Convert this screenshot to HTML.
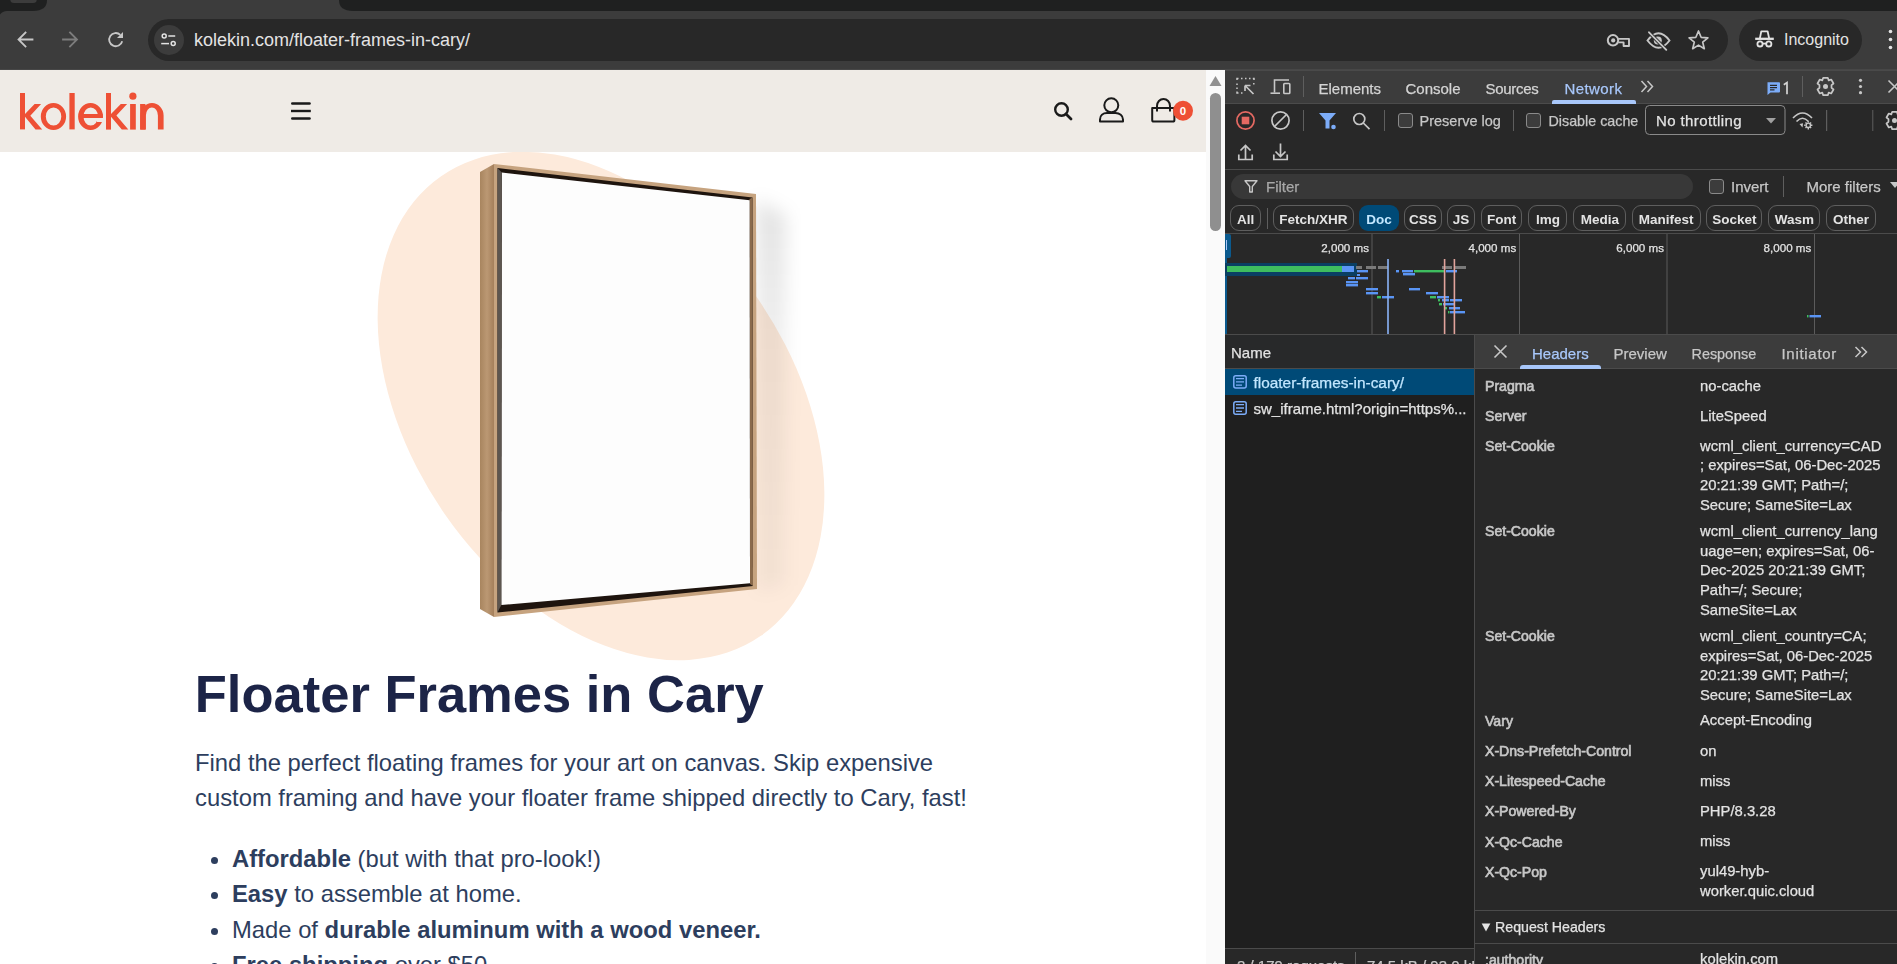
<!DOCTYPE html>
<html><head><meta charset="utf-8">
<style>
*{margin:0;padding:0;box-sizing:border-box}
html,body{width:1897px;height:964px;overflow:hidden;background:#3c3c3c;font-family:"Liberation Sans",sans-serif}
.a{position:absolute}
.t{position:absolute;white-space:nowrap;line-height:1}
svg{position:absolute;overflow:visible}
#dt{will-change:transform}
#dt .t{-webkit-text-stroke:0.25px currentColor}
.bul{position:absolute;left:15.5px;top:16px;width:7px;height:7px;border-radius:50%;background:#2d3e5e}
</style></head><body>

<!-- ===== Browser chrome ===== -->
<svg style="left:0;top:0" width="1897" height="20">
  <path d="M0 0 H47 Q47 10.9 33 10.9 H7 Q2.5 10.9 0 14.6 Z" fill="#1f2020"/>
  <path d="M10.4 0 H36.7 Q36.7 2.9 33 2.9 H14 Q10.4 2.9 10.4 0 Z" fill="#3c3c3c"/>
  <path d="M339 0 Q339 10.9 353 10.9 H1897 V0 Z" fill="#1f2020"/>
</svg>
<div class="a" style="left:0;top:69px;width:1897px;height:1px;background:#474747"></div>

<!-- nav icons -->
<svg style="left:0;top:0" width="140" height="70">
  <g stroke="#c7c7c7" stroke-width="1.8" fill="none" stroke-linecap="square">
    <path d="M19 39.5 H32.5 M25.5 32.5 L18.5 39.5 L25.5 46.5"/>
  </g>
  <path d="M123 32 V38 H117 Z" fill="#c7c7c7"/>
  <g stroke="#7d7d7d" stroke-width="1.8" fill="none" stroke-linecap="square">
    <path d="M63 39.5 H76.5 M70 32.5 L77 39.5 L70 46.5"/>
  </g>
  <g stroke="#c7c7c7" stroke-width="1.8" fill="none">
    <path d="M122.2 41.2 A6.6 6.6 0 1 1 120.3 34.8"/>
  </g>
</svg>

<!-- omnibox -->
<div class="a" style="left:148px;top:19px;width:1580px;height:42px;border-radius:21px;background:#282828"></div>
<div class="a" style="left:154px;top:25px;width:30px;height:30px;border-radius:15px;background:#3c3c3c"></div>
<svg style="left:0;top:0" width="200" height="70">
  <g stroke="#e3e3e3" stroke-width="1.5" fill="none">
    <circle cx="164.2" cy="36" r="2"/>
    <path d="M168.3 36 H175.2"/>
    <circle cx="173.2" cy="43.6" r="2"/>
    <path d="M161.2 43.6 H169"/>
  </g>
</svg>
<div class="t" style="left:194px;top:31px;font-size:18px;color:#e3e3e3">kolekin.com/floater-frames-in-cary/</div>

<!-- right omnibox icons -->
<svg style="left:0;top:0" width="1897" height="70">
  <g stroke="#c7c7c7" stroke-width="2" fill="none">
    <circle cx="1613" cy="40.3" r="5.2"/>
    <path d="M1618.3 38.9 H1629 V46 H1623.6 V42.4 H1618.3" stroke-width="1.9" stroke-linejoin="round"/>
  </g>
  <circle cx="1613.2" cy="40.4" r="2.1" fill="#c7c7c7"/>
  <g stroke="#c7c7c7" stroke-width="1.9" fill="none">
    <path d="M1647.5 40.5 Q1658.5 26 1669.5 40.5 Q1658.5 55 1647.5 40.5 Z"/>
  </g>
  <circle cx="1657.8" cy="40.5" r="4" fill="#c7c7c7"/>
  <path d="M1648.5 32 L1666.5 50" stroke="#282828" stroke-width="3.6"/>
  <path d="M1649 32.3 L1666.3 49.8" stroke="#c7c7c7" stroke-width="1.9" stroke-linecap="round"/>
  <g stroke="#c7c7c7" stroke-width="1.7" fill="none" stroke-linejoin="round">
    <path d="M1698.5 31 L1701.1 37.3 L1707.9 37.8 L1702.7 42.1 L1704.3 48.7 L1698.5 45.1 L1692.7 48.7 L1694.3 42.1 L1689.1 37.8 L1695.9 37.3 Z"/>
  </g>
</svg>
<div class="a" style="left:1739px;top:19px;width:123px;height:42px;border-radius:21px;background:#282828"></div>
<svg style="left:0;top:0" width="1897" height="70">
  <g stroke="#e3e3e3" stroke-width="1.8" fill="none" stroke-linejoin="round">
    <path d="M1759.8 38.6 L1761.3 31.3 H1767.6 L1769.2 38.6"/>
    <path d="M1755.2 38.8 H1773.8" stroke-width="2.3"/>
    <circle cx="1760" cy="43.9" r="2.6"/>
    <circle cx="1768.8" cy="43.9" r="2.6"/>
    <path d="M1762.6 43.6 H1766.2"/>
  </g>
  <g fill="#e3e3e3">
    <circle cx="1890.5" cy="31.5" r="1.8"/>
    <circle cx="1890.5" cy="39.5" r="1.8"/>
    <circle cx="1890.5" cy="47.5" r="1.8"/>
  </g>
</svg>
<div class="t" style="left:1784px;top:32px;font-size:16px;color:#e3e3e3">Incognito</div>

<!-- ===== Page viewport ===== -->
<div class="a" id="page" style="left:0;top:70px;width:1206px;height:894px;background:#fff;overflow:hidden">
  <svg style="left:0;top:-70px" width="1206" height="964">
    <ellipse cx="601" cy="406" rx="280" ry="190" transform="rotate(55.18 601 406)" fill="#fdeadb"/>
  </svg>
  <svg style="left:0;top:-70px" width="1206" height="964">
    <defs>
      <filter id="shb" x="-50%" y="-50%" width="200%" height="200%"><feGaussianBlur stdDeviation="9"/></filter>
      <linearGradient id="shg" x1="0" x2="0" y1="0" y2="1"><stop offset="0" stop-color="#000" stop-opacity="0.11"/><stop offset="0.35" stop-color="#000" stop-opacity="0.07"/><stop offset="1" stop-color="#000" stop-opacity="0.04"/></linearGradient>
      <linearGradient id="wood" x1="0" x2="1" y1="0" y2="0">
        <stop offset="0" stop-color="#a8855f"/><stop offset="0.5" stop-color="#bb9873"/><stop offset="1" stop-color="#a47f5b"/>
      </linearGradient>
    </defs>
    <polygon points="756,200 786,215 784,585 757,592" fill="url(#shg)" filter="url(#shb)"/>
    <polygon points="480,172 494,164 494,617 480,609" fill="url(#wood)"/>
    <polygon points="494,164 756,194 757,589 494,617" fill="#c6a37f"/>
    <polygon points="497.5,168 752.5,197.5 753,586 497.5,612.5" fill="#1e140e"/>
    <polygon points="749.5,199 752.5,197.5 753,586 750,584" fill="#8a6a4c"/>
    <polygon points="501.8,172.6 749.6,200.2 750,583.3 501.3,605" fill="#fdfdfd"/>
    <polygon points="497.5,168 501.8,172.6 501.3,605 497.5,612.5" fill="#5d5650"/>
  </svg>
  <div class="t" style="left:194.8px;top:598.2px;font-size:52.5px;font-weight:bold;color:#1c2447">Floater Frames in Cary</div>
  <div class="t" style="left:195px;top:676px;font-size:23.8px;line-height:34.5px;color:#2d3e5e;white-space:normal;width:800px">Find the perfect floating frames for your art on canvas. Skip expensive<br>custom framing and have your floater frame shipped directly to Cary, fast!</div>
  <div class="a" style="left:195px;top:770.8px;font-size:23.8px;line-height:35.4px;color:#2d3e5e;width:800px">
    <div style="position:relative;padding-left:37px"><span class="bul"></span><b>Affordable</b> (but with that pro-look!)</div>
    <div style="position:relative;padding-left:37px"><span class="bul"></span><b>Easy</b> to assemble at home.</div>
    <div style="position:relative;padding-left:37px"><span class="bul"></span>Made of <b>durable aluminum with a wood veneer.</b></div>
    <div style="position:relative;padding-left:37px"><span class="bul"></span><b>Free shipping</b> over $50</div>
  </div>

  <div class="a" style="left:0;top:0;width:1206px;height:82px;background:#efebe6"></div>
  <svg style="left:0;top:-70px" width="1206" height="160">
    <g fill="#ee5035">
      <rect x="20" y="93" width="5" height="36.4"/>
      <polygon points="25,114 34.6,104 41.1,104 30.3,115.7 42.2,129.4 35.5,129.4 25,116.8"/>
      <path fill-rule="evenodd" d="M40.8 116.5 a12.65 13.5 0 1 0 25.3 0 a12.65 13.5 0 1 0 -25.3 0 Z M45.8 116.5 a7.75 9.05 0 1 0 15.5 0 a7.75 9.05 0 1 0 -15.5 0 Z"/>
      <rect x="69.4" y="93" width="5.3" height="36.4"/>
      <path fill-rule="evenodd" d="M78.1 116.5 a12.45 13.5 0 1 0 24.9 0 a12.45 13.5 0 1 0 -24.9 0 Z M83.5 116.5 a7.25 9.1 0 1 0 14.5 0 a7.25 9.1 0 1 0 -14.5 0 Z"/>
      <rect x="79" y="114" width="23.5" height="4"/>
      <rect x="106" y="93" width="5" height="36.6"/>
      <polygon points="111,114 120.8,104 127.1,104 116.4,115.5 128.3,129.6 121.8,129.6 111,116.8"/>
      <rect x="130.1" y="104" width="5.7" height="25.6"/>
      <circle cx="132.9" cy="96.2" r="3.6"/>
      <rect x="140.1" y="104" width="5.3" height="25.6"/>
      <path d="M140.4 129.6 V115.5 A11.6 12.5 0 0 1 163.6 115.5 V129.6 H157.9 V115.5 A6 8 0 0 0 145.9 115.5 V129.6 Z"/>
    </g>
    <rect x="97" y="118" width="7" height="4" fill="#efebe6"/>
    <g fill="#1a1a1a">
      <rect x="291" y="102.2" width="19.8" height="2.6" rx="1.3"/>
      <rect x="291" y="109.8" width="19.8" height="2.4"/>
      <rect x="291" y="117.2" width="19.8" height="2.6" rx="1.3"/>
    </g>
    <g stroke="#1a1a1a" fill="none" stroke-width="2.4">
      <circle cx="1061.5" cy="109.5" r="6.3"/>
      <path d="M1066 114 L1071 119" stroke-width="2.8" stroke-linecap="round"/>
      <circle cx="1111.3" cy="105.3" r="7" stroke-width="2"/>
      <path d="M1100 121.6 V119.5 C1100 115.5 1103 113 1107 113 H1115.5 C1119.5 113 1123 115.5 1123 119.5 V121.6 Z" stroke-width="2" stroke-linejoin="round"/>
      <path d="M1152.2 108 H1174.4 V120 Q1174.4 121.6 1172.8 121.6 H1153.8 Q1152.2 121.6 1152.2 120 Z" stroke-width="2" stroke-linejoin="round"/>
      <path d="M1157 111.5 V106 A6.5 7 0 0 1 1170 106 V111.5" stroke-width="2"/>
    </g>
    <circle cx="1183" cy="110.7" r="10" fill="#ee5035"/>
    <text x="1183" y="114.8" font-family="Liberation Sans" font-weight="bold" font-size="11.5" fill="#fff" text-anchor="middle">0</text>
  </svg>
</div>

<!-- page scrollbar -->
<div class="a" style="left:1206px;top:70px;width:19px;height:894px;background:#fafafa"></div>
<svg style="left:0;top:0" width="1897" height="240"><path d="M1209.5 86 L1215.5 76 L1221.5 86 Z" fill="#919191"/></svg>
<div class="a" style="left:1210px;top:92.5px;width:11px;height:138.5px;border-radius:5.5px;background:#8f8f8f"></div>

<!-- ===== DevTools ===== -->
<div class="a" id="dt" style="left:0;top:0;width:1897px;height:964px;clip-path:inset(70px 0 0 1225px)">
<div class="a" style="left:1225px;top:70px;width:672px;height:894px;background:#282828;"></div>
<div class="a" style="left:1225px;top:70px;width:672px;height:33px;background:#3c3c3c;"></div>
<div class="a" style="left:1225px;top:70px;width:672px;height:1px;background:#4a4a4a;"></div>
<div class="a" style="left:1225px;top:103px;width:672px;height:1px;background:#4b4b4b;"></div>
<div class="a" style="left:1225px;top:169px;width:672px;height:1px;background:#4b4b4b;"></div>
<div class="a" style="left:1225px;top:233px;width:672px;height:1px;background:#4b4b4b;"></div>
<div class="a" style="left:1225px;top:334px;width:672px;height:1px;background:#4b4b4b;"></div>
<div class="a" style="left:1225px;top:335px;width:249px;height:629px;background:#1f1f1f;"></div>
<div class="a" style="left:1225px;top:335px;width:249px;height:33px;background:#28292a;"></div>
<div class="a" style="left:1475px;top:335px;width:422px;height:33px;background:#3c3c3c;"></div>
<div class="a" style="left:1225px;top:368px;width:672px;height:1px;background:#4b4b4b;"></div>
<div class="a" style="left:1474px;top:335px;width:1px;height:629px;background:#4b4b4b;"></div>
<svg style="left:0;top:0" width="1897" height="110">
 <g stroke="#c7c7c7" stroke-width="1.5" fill="none">
  <path d="M1237 80 v-1.5 h1.5 M1241 78.5 h1.5 M1245 78.5 h1.5 M1249 78.5 h1.5 M1252.8 78.5 h1.2 v1.5 M1253.8 83 v1.5 M1237 83.5 v1.5 M1237 87.5 v1.5 M1237 91.5 v1.5 h1.5 M1241 93 h1.5" stroke-linecap="butt"/>
  <path d="M1245 85.5 L1253.5 94 M1245 85.5 h5.5 M1245 85.5 v5.5" stroke-width="1.7"/>
 </g>
 <g stroke="#c7c7c7" stroke-width="1.6" fill="none">
  <path d="M1274.5 92.5 V80 H1289"/>
  <path d="M1270.5 93.2 H1280"/>
  <rect x="1283.8" y="83.5" width="6" height="10" rx="0.8"/>
 </g>
 <rect x="1303" y="76" width="1" height="21" fill="#5e5e5e"/>
 <g stroke="#c7c7c7" stroke-width="1.5" fill="none">
  <path d="M1641.5 81 L1646.5 86.5 L1641.5 92 M1647.5 81 L1652.5 86.5 L1647.5 92"/>
 </g>
 <path d="M1767.5 82.2 h11.5 q1 0 1 1 v8.3 q0 1 -1 1 h-8.5 l-3 2.5 z" fill="#7cacf8"/>
 <g stroke="#282828" stroke-width="1.2"><path d="M1770 85.3 h7 M1770 87.6 h7 M1770 89.9 h4.5"/></g>
 <rect x="1802" y="76" width="1" height="21" fill="#5e5e5e"/>
 <g fill="#7d7d7d"></g>
 <g stroke="#c7c7c7" stroke-width="1.7" fill="none">
  <circle cx="1825.5" cy="86.5" r="2.5" fill="#c7c7c7" stroke="none"/>
  <path d="M1823.2 77.8 h4.6 l0.9 2.6 l2.5 -0.9 l2.3 4 l-2 1.7 v2.6 l2 1.7 l-2.3 4 l-2.5 -0.9 l-0.9 2.6 h-4.6 l-0.9 -2.6 l-2.5 0.9 l-2.3 -4 l2 -1.7 v-2.6 l-2 -1.7 l2.3 -4 l2.5 0.9 z" stroke-linejoin="round"/>
 </g>
 <g fill="#c7c7c7"><circle cx="1860.5" cy="80.3" r="1.6"/><circle cx="1860.5" cy="86.5" r="1.6"/><circle cx="1860.5" cy="92.7" r="1.6"/></g>
 <g stroke="#c7c7c7" stroke-width="1.6"><path d="M1888.5 80.5 L1900.5 92.5 M1900.5 80.5 L1888.5 92.5"/></g>
 <rect x="1552" y="100" width="84" height="4" rx="2" fill="#a8c7fa"/>
</svg>
<div class="a" style="left:1552px;top:102px;width:84px;height:2px;background:#a8c7fa;"></div>
<div class="t" style="left:1318.5px;top:81.30px;font-size:15px;color:#d4d4d4;">Elements</div>
<div class="t" style="left:1405.5px;top:81.30px;font-size:15px;color:#d4d4d4;">Console</div>
<div class="t" style="left:1485.5px;top:81.30px;font-size:15px;color:#d4d4d4;letter-spacing:-0.3px">Sources</div>
<div class="t" style="left:1564.5px;top:81.30px;font-size:15px;color:#a8c7fa;letter-spacing:0.4px">Network</div>
<svg style="left:0;top:0" width="1897" height="100"><path d="M1787 94.2 V82.6 L1783.8 84.8" stroke="#d4d4d4" stroke-width="1.7" fill="none"/></svg>
<svg style="left:0;top:0" width="1897" height="170">
 <circle cx="1245.5" cy="120.5" r="8.6" stroke="#e46962" stroke-width="1.7" fill="none"/>
 <rect x="1241.7" y="116.7" width="7.6" height="7.6" fill="#e46962"/>
 <circle cx="1280.5" cy="120.5" r="8.6" stroke="#c7c7c7" stroke-width="1.7" fill="none"/>
 <path d="M1274.5 126.5 L1286.5 114.5" stroke="#c7c7c7" stroke-width="1.7"/>
 <rect x="1303" y="110" width="1" height="21" fill="#5e5e5e"/>
 <path d="M1319 113 H1336 L1329.5 120.5 V128.5 H1325.5 V120.5 Z" fill="#7cacf8"/>
 <circle cx="1333.5" cy="127" r="2.3" fill="#7cacf8"/>
 <circle cx="1359.3" cy="119" r="5.5" stroke="#c7c7c7" stroke-width="1.7" fill="none"/>
 <path d="M1363.3 123 L1369.5 129.2" stroke="#c7c7c7" stroke-width="1.7"/>
 <rect x="1384" y="110" width="1" height="21" fill="#5e5e5e"/>
 <rect x="1398.5" y="113.5" width="14" height="14" rx="2.5" fill="#3c3c3c" stroke="#8a8a8a" stroke-width="1"/>
 <rect x="1513" y="110" width="1" height="21" fill="#5e5e5e"/>
 <rect x="1526.5" y="113.5" width="14" height="14" rx="2.5" fill="#3c3c3c" stroke="#8a8a8a" stroke-width="1"/>
 <rect x="1645.5" y="105.5" width="139.5" height="29" rx="4" fill="none" stroke="#8a8a8a" stroke-width="1"/>
 <path d="M1766 118 H1776 L1771 123.5 Z" fill="#a0a0a0"/>
 <g stroke="#c7c7c7" stroke-width="1.6" fill="none">
  <path d="M1793 118 Q1802.5 108 1812 118"/>
  <path d="M1796.5 121.5 Q1802.5 115 1808.5 121.5"/>
 </g>
 <path d="M1799.5 124 L1802.5 127.5 L1803 123.2 Z" fill="#c7c7c7"/>
 <g stroke="#c7c7c7" stroke-width="1.4" fill="none"><circle cx="1808.3" cy="125.3" r="2.2"/>
  <path d="M1808.3 121.2 v1.4 M1808.3 128 v1.4 M1804.2 125.3 h1.4 M1811 125.3 h1.4 M1805.5 122.5 l1 1 M1810.1 127.1 l1 1 M1811.1 122.5 l-1 1 M1806.5 127.1 l-1 1"/></g>
 <rect x="1826" y="110" width="1.2" height="21" fill="#5e5e5e"/>
 <rect x="1872.3" y="110" width="1" height="21" fill="#5e5e5e"/>
 <g stroke="#c7c7c7" stroke-width="1.7" fill="none">
  <circle cx="1894.5" cy="120.5" r="2.5" fill="#c7c7c7" stroke="none"/>
  <path d="M1892.2 111.8 h4.6 l0.9 2.6 l2.5 -0.9 l2.3 4 l-2 1.7 v2.6 l2 1.7 l-2.3 4 l-2.5 -0.9 l-0.9 2.6 h-4.6 l-0.9 -2.6 l-2.5 0.9 l-2.3 -4 l2 -1.7 v-2.6 l-2 -1.7 l2.3 -4 l2.5 0.9 z" stroke-linejoin="round"/>
 </g>
 <g stroke="#c7c7c7" stroke-width="1.7" fill="none">
  <path d="M1245.5 159 V145.5 M1240.5 150.5 L1245.5 145.5 L1250.5 150.5"/>
  <path d="M1238.8 154.5 V159.5 H1252.2 V154.5"/>
  <path d="M1280.5 143.5 V156.5 M1275.5 151.5 L1280.5 156.5 L1285.5 151.5"/>
  <path d="M1273.8 154.5 V159.5 H1287.2 V154.5"/>
 </g>
</svg>
<div class="t" style="left:1419.5px;top:113.93px;font-size:14.5px;color:#c7c7c7;">Preserve log</div>
<div class="t" style="left:1548.5px;top:114.10px;font-size:14.3px;color:#c7c7c7;">Disable cache</div>
<div class="t" style="left:1656px;top:113.30px;font-size:15px;color:#e3e3e3;letter-spacing:0.4px">No throttling</div>
<div class="a" style="left:1231px;top:174px;width:462px;height:25px;background:#383838;border-radius:12.5px"></div>
<svg style="left:0;top:0" width="1897" height="240">
 <path d="M1245 180.8 H1257 L1252.3 186.5 V192 H1249.7 V186.5 Z" fill="none" stroke="#c7c7c7" stroke-width="1.4" stroke-linejoin="round"/>
 <rect x="1709.5" y="179.5" width="14" height="14" rx="2.5" fill="#3c3c3c" stroke="#8a8a8a" stroke-width="1"/>
 <rect x="1783" y="176" width="1" height="21" fill="#5e5e5e"/>
 <path d="M1890 182 H1900 L1895 188 Z" fill="#c7c7c7"/>
 <rect x="1267" y="208" width="1" height="21" fill="#5e5e5e"/>
</svg>
<div class="t" style="left:1266px;top:178.50px;font-size:15px;color:#a8a8a8;">Filter</div>
<div class="t" style="left:1731px;top:178.50px;font-size:15px;color:#c7c7c7;">Invert</div>
<div class="t" style="left:1806.5px;top:178.50px;font-size:15px;color:#c7c7c7;">More filters</div>
<div class="a" style="left:1230.3px;top:205px;width:30.5px;height:26px;border-radius:9px;border:1px solid #5e5e5e;color:#e3e3e3;font-size:13.5px;font-weight:bold;line-height:27px;text-align:center">All</div>
<div class="a" style="left:1273.2px;top:205px;width:80.4px;height:26px;border-radius:9px;border:1px solid #5e5e5e;color:#e3e3e3;font-size:13.5px;font-weight:bold;line-height:27px;text-align:center">Fetch/XHR</div>
<div class="a" style="left:1359.0px;top:205px;width:40.0px;height:26px;border-radius:9px;background:#004a77;color:#c2e7ff;font-size:13.5px;font-weight:bold;line-height:29px;text-align:center">Doc</div>
<div class="a" style="left:1404.0px;top:205px;width:37.8px;height:26px;border-radius:9px;border:1px solid #5e5e5e;color:#e3e3e3;font-size:13.5px;font-weight:bold;line-height:27px;text-align:center">CSS</div>
<div class="a" style="left:1446.8px;top:205px;width:28.2px;height:26px;border-radius:9px;border:1px solid #5e5e5e;color:#e3e3e3;font-size:13.5px;font-weight:bold;line-height:27px;text-align:center">JS</div>
<div class="a" style="left:1481.0px;top:205px;width:41.4px;height:26px;border-radius:9px;border:1px solid #5e5e5e;color:#e3e3e3;font-size:13.5px;font-weight:bold;line-height:27px;text-align:center">Font</div>
<div class="a" style="left:1528.4px;top:205px;width:39.1px;height:26px;border-radius:9px;border:1px solid #5e5e5e;color:#e3e3e3;font-size:13.5px;font-weight:bold;line-height:27px;text-align:center">Img</div>
<div class="a" style="left:1573.4px;top:205px;width:52.8px;height:26px;border-radius:9px;border:1px solid #5e5e5e;color:#e3e3e3;font-size:13.5px;font-weight:bold;line-height:27px;text-align:center">Media</div>
<div class="a" style="left:1632.0px;top:205px;width:68.5px;height:26px;border-radius:9px;border:1px solid #5e5e5e;color:#e3e3e3;font-size:13.5px;font-weight:bold;line-height:27px;text-align:center">Manifest</div>
<div class="a" style="left:1706.4px;top:205px;width:56.1px;height:26px;border-radius:9px;border:1px solid #5e5e5e;color:#e3e3e3;font-size:13.5px;font-weight:bold;line-height:27px;text-align:center">Socket</div>
<div class="a" style="left:1768.4px;top:205px;width:51.9px;height:26px;border-radius:9px;border:1px solid #5e5e5e;color:#e3e3e3;font-size:13.5px;font-weight:bold;line-height:27px;text-align:center">Wasm</div>
<div class="a" style="left:1826.2px;top:205px;width:49.5px;height:26px;border-radius:9px;border:1px solid #5e5e5e;color:#e3e3e3;font-size:13.5px;font-weight:bold;line-height:27px;text-align:center">Other</div>
<svg style="left:0;top:0" width="1897" height="340">
 <g fill="#5b5b5b"><rect x="1371.5" y="234" width="1" height="100"/><rect x="1519" y="234" width="1" height="100"/><rect x="1666.5" y="234" width="1" height="100"/><rect x="1814" y="234" width="1" height="100"/></g>
 <rect x="1225" y="234" width="6" height="24" rx="2" fill="#0b5a8e"/>
 <rect x="1225" y="234" width="2" height="100" fill="#0b5a8e"/>
 <rect x="1226" y="240" width="1" height="10" fill="#a8c7fa"/>
 <rect x="1225" y="263" width="132" height="13" fill="#0a3f63"/>
 <rect x="1227" y="266" width="115" height="6" fill="#3ebd5f"/>
 <rect x="1342" y="266" width="12" height="6" fill="#5a95f5"/>
 <g fill="#7a7a7a"><rect x="1356" y="266" width="6" height="3"/><rect x="1366" y="266" width="10" height="3"/><rect x="1378" y="266" width="10" height="3"/><rect x="1442" y="266" width="10" height="3"/><rect x="1454" y="266" width="12" height="3"/></g>
 <g fill="#5a95f5">
  <rect x="1357" y="270" width="11" height="2.4"/>
  <rect x="1396" y="270" width="3" height="2.4"/><rect x="1402" y="270" width="11" height="2.4"/>
  <rect x="1446" y="270" width="11" height="2.4"/>
  <rect x="1357" y="274" width="3" height="2"/><rect x="1403" y="273" width="12" height="2.4"/>
  <rect x="1348" y="277" width="7" height="2.4"/><rect x="1356" y="277" width="12" height="2.4"/>
  <rect x="1346" y="281" width="12" height="2.4"/>
  <rect x="1346" y="284" width="12" height="2.4"/>
  <rect x="1366" y="288" width="12" height="2.4"/><rect x="1409" y="288" width="11" height="2.4"/>
  <rect x="1366" y="292" width="12" height="2.4"/><rect x="1426" y="292" width="12" height="2.4"/>
  <rect x="1382" y="296" width="12" height="2.4"/><rect x="1437" y="296" width="12" height="2.4"/>
  <rect x="1442" y="299" width="7" height="2.4"/><rect x="1450" y="299" width="12" height="2.4"/>
  <rect x="1443" y="303" width="11" height="2.4"/>
  <rect x="1449" y="307" width="11" height="2.4"/>
  <rect x="1450" y="311" width="15" height="2.4"/>
  <rect x="1809.5" y="315" width="11.5" height="2.4"/>
 </g>
 <g fill="#3ebd5f">
  <rect x="1414" y="270" width="30" height="2.4"/>
  <rect x="1377" y="296" width="4" height="2.4"/><rect x="1430" y="296" width="6" height="2.4"/>
  <rect x="1438" y="299" width="2" height="2.4"/>
  <rect x="1439" y="303" width="3" height="2.4"/>
  <rect x="1445" y="307" width="2" height="2.4"/>
  <rect x="1448" y="311" width="1.5" height="2.4"/>
  <rect x="1807" y="315" width="1.5" height="2.4"/>
 </g>
 <rect x="1387.2" y="259" width="1.6" height="75" fill="#8ab4f8"/>
 <rect x="1443.8" y="259" width="1.6" height="75" fill="#e2a39c"/>
 <rect x="1453.6" y="259" width="1.6" height="75" fill="#e2a39c"/>
</svg>
<div class="t" style="right:528px;top:242.18px;font-size:11.6px;color:#e3e3e3;">2,000 ms</div>
<div class="t" style="right:380.79999999999995px;top:242.18px;font-size:11.6px;color:#e3e3e3;">4,000 ms</div>
<div class="t" style="right:233px;top:242.18px;font-size:11.6px;color:#e3e3e3;">6,000 ms</div>
<div class="t" style="right:85.70000000000005px;top:242.18px;font-size:11.6px;color:#e3e3e3;">8,000 ms</div>
<div class="t" style="left:1231px;top:344.50px;font-size:15px;color:#e3e3e3;">Name</div>
<div class="a" style="left:1225px;top:369px;width:249px;height:26px;background:#004a77;"></div>
<svg style="left:0;top:0" width="1897" height="430">
 <g stroke="#7cacf8" stroke-width="1.5" fill="none">
  <rect x="1233.8" y="375.7" width="12.4" height="12.4" rx="2"/>
  <rect x="1233.8" y="401.8" width="12.4" height="12.4" rx="2"/>
 </g>
 <g stroke="#7cacf8" stroke-width="1.3">
  <path d="M1236 378.6 h8 M1236 381.9 h8 M1236 385.2 h6"/>
  <path d="M1236 404.7 h8 M1236 408 h8 M1236 411.3 h6"/>
 </g>
 <g stroke="#c7c7c7" stroke-width="1.6"><path d="M1494.5 345.5 L1506.5 357.5 M1506.5 345.5 L1494.5 357.5"/></g>
 <g stroke="#c7c7c7" stroke-width="1.5" fill="none"><path d="M1855.5 347 L1860.5 352 L1855.5 357 M1861.5 347 L1866.5 352 L1861.5 357"/></g>
</svg>
<div class="t" style="left:1253.5px;top:374.66px;font-size:15.4px;color:#c2e7ff;">floater-frames-in-cary/</div>
<div class="t" style="left:1253.5px;top:400.60px;font-size:15px;color:#e3e3e3;">sw_iframe.html?origin=https%...</div>
<div class="t" style="left:1532px;top:346.10px;font-size:15px;color:#a8c7fa;">Headers</div>
<div class="a" style="left:1520px;top:365px;width:81px;height:4px;border-radius:3px 3px 0 0;background:#a8c7fa"></div>
<div class="t" style="left:1613.5px;top:346.10px;font-size:15px;color:#c7c7c7;">Preview</div>
<div class="t" style="left:1691.5px;top:346.61px;font-size:14.4px;color:#c7c7c7;">Response</div>
<div class="t" style="left:1781.5px;top:346.10px;font-size:15px;color:#c7c7c7;letter-spacing:0.7px">Initiator</div>
<div class="t" style="left:1485px;top:379.26px;font-size:14.1px;color:#c7c7c7;-webkit-text-stroke:0.65px #c7c7c7">Pragma</div>
<div class="t" style="left:1700px;top:378.67px;font-size:14.8px;color:#e3e3e3;">no-cache</div>
<div class="t" style="left:1485px;top:409.26px;font-size:14.1px;color:#c7c7c7;-webkit-text-stroke:0.65px #c7c7c7">Server</div>
<div class="t" style="left:1700px;top:408.67px;font-size:14.8px;color:#e3e3e3;">LiteSpeed</div>
<div class="t" style="left:1485px;top:439.26px;font-size:14.1px;color:#c7c7c7;-webkit-text-stroke:0.65px #c7c7c7">Set-Cookie</div>
<div class="t" style="left:1700px;top:438.67px;font-size:14.8px;color:#e3e3e3;">wcml_client_currency=CAD</div>
<div class="t" style="left:1700px;top:458.42px;font-size:14.8px;color:#e3e3e3;">; expires=Sat, 06-Dec-2025</div>
<div class="t" style="left:1700px;top:478.17px;font-size:14.8px;color:#e3e3e3;">20:21:39 GMT; Path=/;</div>
<div class="t" style="left:1700px;top:497.92px;font-size:14.8px;color:#e3e3e3;">Secure; SameSite=Lax</div>
<div class="t" style="left:1485px;top:524.46px;font-size:14.1px;color:#c7c7c7;-webkit-text-stroke:0.65px #c7c7c7">Set-Cookie</div>
<div class="t" style="left:1700px;top:523.87px;font-size:14.8px;color:#e3e3e3;">wcml_client_currency_lang</div>
<div class="t" style="left:1700px;top:543.62px;font-size:14.8px;color:#e3e3e3;">uage=en; expires=Sat, 06-</div>
<div class="t" style="left:1700px;top:563.37px;font-size:14.8px;color:#e3e3e3;">Dec-2025 20:21:39 GMT;</div>
<div class="t" style="left:1700px;top:583.12px;font-size:14.8px;color:#e3e3e3;">Path=/; Secure;</div>
<div class="t" style="left:1700px;top:602.87px;font-size:14.8px;color:#e3e3e3;">SameSite=Lax</div>
<div class="t" style="left:1485px;top:629.46px;font-size:14.1px;color:#c7c7c7;-webkit-text-stroke:0.65px #c7c7c7">Set-Cookie</div>
<div class="t" style="left:1700px;top:628.87px;font-size:14.8px;color:#e3e3e3;">wcml_client_country=CA;</div>
<div class="t" style="left:1700px;top:648.62px;font-size:14.8px;color:#e3e3e3;">expires=Sat, 06-Dec-2025</div>
<div class="t" style="left:1700px;top:668.37px;font-size:14.8px;color:#e3e3e3;">20:21:39 GMT; Path=/;</div>
<div class="t" style="left:1700px;top:688.12px;font-size:14.8px;color:#e3e3e3;">Secure; SameSite=Lax</div>
<div class="t" style="left:1485px;top:714.06px;font-size:14.1px;color:#c7c7c7;-webkit-text-stroke:0.65px #c7c7c7">Vary</div>
<div class="t" style="left:1700px;top:713.47px;font-size:14.8px;color:#e3e3e3;">Accept-Encoding</div>
<div class="t" style="left:1485px;top:744.16px;font-size:14.1px;color:#c7c7c7;-webkit-text-stroke:0.65px #c7c7c7">X-Dns-Prefetch-Control</div>
<div class="t" style="left:1700px;top:743.57px;font-size:14.8px;color:#e3e3e3;">on</div>
<div class="t" style="left:1485px;top:774.36px;font-size:14.1px;color:#c7c7c7;-webkit-text-stroke:0.65px #c7c7c7">X-Litespeed-Cache</div>
<div class="t" style="left:1700px;top:773.77px;font-size:14.8px;color:#e3e3e3;">miss</div>
<div class="t" style="left:1485px;top:804.46px;font-size:14.1px;color:#c7c7c7;-webkit-text-stroke:0.65px #c7c7c7">X-Powered-By</div>
<div class="t" style="left:1700px;top:803.87px;font-size:14.8px;color:#e3e3e3;">PHP/8.3.28</div>
<div class="t" style="left:1485px;top:834.56px;font-size:14.1px;color:#c7c7c7;-webkit-text-stroke:0.65px #c7c7c7">X-Qc-Cache</div>
<div class="t" style="left:1700px;top:833.97px;font-size:14.8px;color:#e3e3e3;">miss</div>
<div class="t" style="left:1485px;top:864.66px;font-size:14.1px;color:#c7c7c7;-webkit-text-stroke:0.65px #c7c7c7">X-Qc-Pop</div>
<div class="t" style="left:1700px;top:864.07px;font-size:14.8px;color:#e3e3e3;">yul49-hyb-</div>
<div class="t" style="left:1700px;top:883.82px;font-size:14.8px;color:#e3e3e3;">worker.quic.cloud</div>
<div class="a" style="left:1475px;top:910px;width:422px;height:1px;background:#4b4b4b;"></div>
<svg style="left:0;top:0" width="1897" height="964"><path d="M1481.7 923.5 H1490.4 L1486 931.4 Z" fill="#e3e3e3"/></svg>
<div class="t" style="left:1495px;top:920.18px;font-size:14.2px;color:#e3e3e3;">Request Headers</div>
<div class="a" style="left:1475px;top:943px;width:422px;height:1px;background:#4b4b4b;"></div>
<div class="t" style="left:1485px;top:952.56px;font-size:14.1px;color:#c7c7c7;-webkit-text-stroke:0.65px #c7c7c7">:authority</div>
<div class="t" style="left:1700px;top:951.97px;font-size:14.8px;color:#e3e3e3;">kolekin.com</div>
<div class="a" style="left:1225px;top:948px;width:249px;height:1px;background:#4b4b4b;"></div>
<div class="a" style="left:1225px;top:949px;width:249px;height:15px;background:#282828;"></div>
<div class="t" style="left:1237px;top:958.30px;font-size:15px;color:#c7c7c7;">2 / 179 requests</div>
<div class="a" style="left:1355px;top:952px;width:1px;height:12px;background:#5e5e5e;"></div>
<div class="t" style="left:1367px;top:958.30px;font-size:15px;color:#c7c7c7;width:107px;overflow:hidden">74.5 kB / 93.0 kB</div>
</div>

</body></html>
